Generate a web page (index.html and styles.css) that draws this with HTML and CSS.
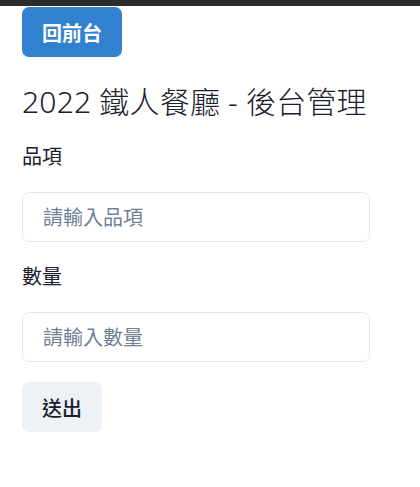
FILE: index.html
```html
<!DOCTYPE html>
<html lang="zh-Hant">
<head>
    <meta charset="utf-8">
    <title>2022 鐵人餐廳 - 後台管理</title>
    <link rel="stylesheet" href="styles.css">
</head>
<body>
    <div class="top-bar"></div>
    <div class="admin">
        <button class="btn btn-blue">回前台</button>
        <h2 class="title">2022 鐵人餐廳 - 後台管理</h2>
        <form class="item-form">
            <label for="itemName">品項</label>
            <input id="itemName" placeholder="請輸入品項">
            <label for="itemCount">數量</label>
            <input id="itemCount" placeholder="請輸入數量">
            <div>
                <button type="button" class="btn btn-gray">送出</button>
            </div>
        </form>
    </div>
</body>
</html>
```

FILE: styles.css
```css
body {
    margin: 0;
    font-family: "Noto Sans", "Noto Sans CJK TC", sans-serif;
    color: #1a202c;
    background-color: white;
}

.top-bar {
    height: 6px;
    background-color: #2c2c2f;
}

.admin {
    padding: 1px 22px 0 22px;
}

.btn {
    height: 50px;
    padding: 0 20px;
    border: none;
    border-radius: 7px;
    font-family: inherit;
    font-size: 20px;
    font-weight: 700;
    cursor: pointer;
}

.btn-blue {
    background-color: #3182ce;
    color: white;
}

.btn-gray {
    background-color: #edf2f7;
    color: #1a202c;
    font-weight: 500;
}

.title {
    margin: 27px 0 22px 0;
    font-size: 30px;
    font-weight: 300;
    line-height: 36px;
    letter-spacing: 0.2px;
}

.item-form {
    display: flex;
    flex-direction: column;
    gap: 20px;
}

label {
    font-size: 20px;
    line-height: 30px;
}

input {
    width: 348px;
    height: 50px;
    box-sizing: border-box;
    padding: 0 20px;
    border: 1px solid #e2e8f0;
    border-radius: 7px;
    font-family: inherit;
    font-size: 20px;
    color: #1a202c;
    outline: none;
}

input::placeholder {
    color: #718096;
}
```
